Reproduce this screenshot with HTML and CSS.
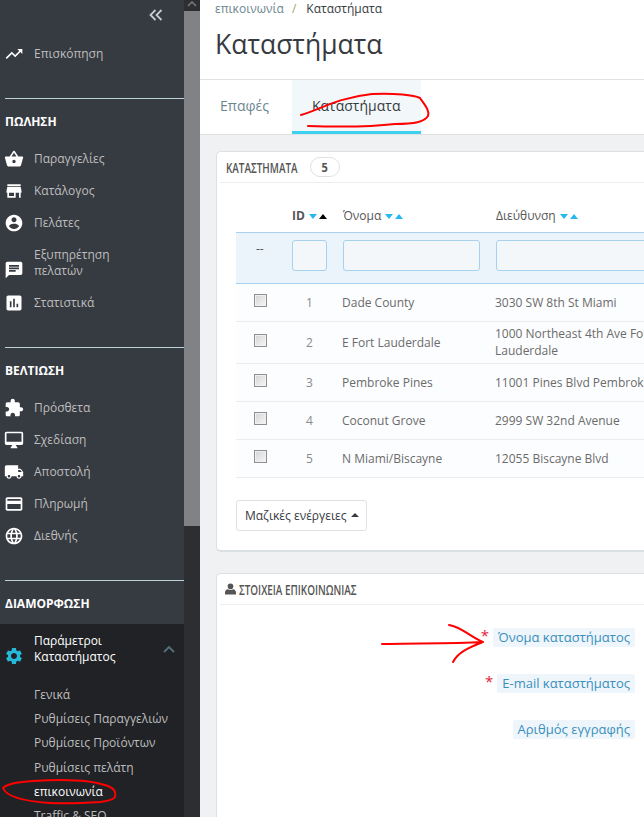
FILE: index.html
```html
<!DOCTYPE html>
<html lang="el">
  <head>
    <meta charset="utf-8">
    <title>Καταστήματα</title>
    <link rel="stylesheet" href="styles.css">
  </head>
  <body>
    <div class="page">
      <nav class="sidebar">
        <div class="collapse">
          <svg viewBox="0 0 14 12" width="14" height="12"><path d="M6.500 1 1.500 6l5 5M12.500 1l-5 5 5 5"/></svg>
        </div>
        <a class="item first"><svg class="ico" viewBox="0 0 24 24"><path d="M16 6l2.290 2.290-4.880 4.880-4-4L2 16.590 3.410 18l6-6 4 4 6.300-6.290L22 12V6z"/></svg><span>Επισκόπηση</span></a>

        <h2 class="section">ΠΩΛΗΣΗ</h2>
        <a class="item"><svg class="ico" viewBox="0 0 24 24"><path d="M17.21 9l-4.38-6.56c-.19-.28-.51-.42-.83-.42-.32 0-.64.14-.83.43L6.79 9H2c-.55 0-1 .45-1 1 0 .09.01.18.04.27l2.54 9.27c.23.84 1 1.46 1.92 1.46h13c.92 0 1.69-.62 1.93-1.46l2.54-9.27L23 10c0-.55-.45-1-1-1h-4.79zM9 9l3-4.4L15 9H9zm3 8c-1.1 0-2-.9-2-2s.9-2 2-2 2 .9 2 2-.9 2-2 2z"/></svg><span>Παραγγελίες</span></a>
        <a class="item"><svg class="ico" viewBox="0 0 24 24"><path d="M20 4H4v2h16V4zm1 10v-2l-1-5H4l-1 5v2h1v6h10v-6h4v6h2v-6h1zm-9 4H6v-4h6v4z"/></svg><span>Κατάλογος</span></a>
        <a class="item"><svg class="ico" viewBox="0 0 24 24"><path d="M12 2C6.48 2 2 6.48 2 12s4.48 10 10 10 10-4.48 10-10S17.52 2 12 2zm0 3c1.66 0 3 1.34 3 3s-1.34 3-3 3-3-1.34-3-3 1.34-3 3-3zm0 14.2c-2.5 0-4.71-1.28-6-3.22.03-1.99 4-3.08 6-3.08 1.99 0 5.97 1.09 6 3.08-1.29 1.94-3.5 3.22-6 3.22z"/></svg><span>Πελάτες</span></a>
        <a class="item tall"><svg class="ico" viewBox="0 0 24 24"><path d="M20 2H4c-1.1 0-1.99.9-1.99 2L2 22l4-4h14c1.1 0 2-.9 2-2V4c0-1.1-.9-2-2-2zM6 9h12v2H6V9zm8 5H6v-2h8v2zm4-6H6V6h12v2z"/></svg><span>Εξυπηρέτηση<br>πελατών</span></a>
        <a class="item"><svg class="ico" viewBox="0 0 24 24"><path d="M19 3H5c-1.1 0-2 .9-2 2v14c0 1.1.9 2 2 2h14c1.1 0 2-.9 2-2V5c0-1.1-.9-2-2-2zM9 17H7v-7h2v7zm4 0h-2V7h2v10zm4 0h-2v-4h2v4z"/></svg><span>Στατιστικά</span></a>

        <h2 class="section">ΒΕΛΤΙΩΣΗ</h2>
        <a class="item"><svg class="ico" viewBox="0 0 24 24"><path d="M20.5 11H19V7c0-1.1-.9-2-2-2h-4V3.5C13 2.12 11.88 1 10.5 1S8 2.12 8 3.5V5H4c-1.1 0-1.99.9-1.99 2v3.8H3.5c1.49 0 2.7 1.21 2.7 2.7s-1.21 2.7-2.7 2.7H2V20c0 1.1.9 2 2 2h3.8v-1.5c0-1.49 1.21-2.7 2.7-2.7 1.49 0 2.7 1.21 2.7 2.7V22H17c1.1 0 2-.9 2-2v-4h1.5c1.38 0 2.5-1.12 2.5-2.5S21.88 11 20.5 11z"/></svg><span>Πρόσθετα</span></a>
        <a class="item"><svg class="ico" viewBox="0 0 24 24"><path d="M21 2H3c-1.1 0-2 .9-2 2v12c0 1.1.9 2 2 2h7l-2 3v1h8v-1l-2-3h7c1.1 0 2-.9 2-2V4c0-1.1-.9-2-2-2zm0 12H3V4h18v10z"/></svg><span>Σχεδίαση</span></a>
        <a class="item"><svg class="ico" viewBox="0 0 24 24"><path d="M20 8h-3V4H3c-1.1 0-2 .9-2 2v11h2c0 1.66 1.34 3 3 3s3-1.34 3-3h6c0 1.66 1.34 3 3 3s3-1.34 3-3h2v-5l-3-4zM6 18.5c-.83 0-1.5-.67-1.5-1.5s.67-1.5 1.5-1.5 1.5.67 1.5 1.5-.67 1.5-1.5 1.5zm13.5-9l1.96 2.5H17V9.5h2.5zm-1.5 9c-.83 0-1.5-.67-1.5-1.5s.67-1.5 1.5-1.5 1.5.67 1.5 1.5-.67 1.5-1.5 1.5z"/></svg><span>Αποστολή</span></a>
        <a class="item"><svg class="ico" viewBox="0 0 24 24"><path d="M20 4H4c-1.11 0-1.99.89-1.99 2L2 18c0 1.11.89 2 2 2h16c1.11 0 2-.89 2-2V6c0-1.11-.89-2-2-2zm0 14H4v-6h16v6zm0-10H4V6h16v2z"/></svg><span>Πληρωμή</span></a>
        <a class="item"><svg class="ico" viewBox="0 0 24 24"><path d="M11.99 2C6.47 2 2 6.48 2 12s4.47 10 9.99 10C17.52 22 22 17.52 22 12S17.52 2 11.99 2zm6.93 6h-2.95c-.32-1.25-.78-2.45-1.38-3.56 1.84.63 3.37 1.91 4.33 3.56zM12 4.04c.83 1.2 1.48 2.53 1.91 3.96h-3.82c.43-1.43 1.08-2.76 1.91-3.96zM4.26 14C4.1 13.36 4 12.69 4 12s.1-1.36.26-2h3.38c-.08.66-.14 1.32-.14 2 0 .68.06 1.34.14 2H4.26zm.82 2h2.95c.32 1.25.78 2.45 1.38 3.56-1.84-.63-3.37-1.9-4.33-3.56zm2.95-8H5.08c.96-1.66 2.49-2.93 4.33-3.56C8.81 5.55 8.35 6.75 8.03 8zM12 19.96c-.83-1.2-1.48-2.53-1.91-3.96h3.82c-.43 1.43-1.08 2.76-1.91 3.96zM14.34 14H9.66c-.09-.66-.16-1.32-.16-2 0-.68.07-1.35.16-2h4.68c.09.65.16 1.32.16 2 0 .68-.07 1.34-.16 2zm.25 5.56c.6-1.11 1.06-2.31 1.38-3.56h2.95c-.96 1.65-2.49 2.93-4.33 3.56zM16.36 14c.08-.66.14-1.32.14-2 0-.68-.06-1.34-.14-2h3.38c.16.64.26 1.31.26 2s-.1 1.36-.26 2h-3.38z"/></svg><span>Διεθνής</span></a>

        <h2 class="section">ΔΙΑΜΟΡΦΩΣΗ</h2>
        <div class="open-group">
          <a class="item tall current">
            <svg class="ico cog" viewBox="0 0 24 24"><path d="M19.14 12.94c.04-.3.06-.61.06-.94 0-.32-.02-.64-.07-.94l2.03-1.58c.18-.14.23-.41.12-.61l-1.92-3.32c-.12-.22-.37-.29-.59-.22l-2.39.96c-.5-.38-1.03-.7-1.62-.94l-.36-2.54c-.04-.24-.24-.41-.48-.41h-3.84c-.24 0-.43.17-.47.41l-.36 2.54c-.59.24-1.13.57-1.62.94l-2.39-.96c-.22-.08-.47 0-.59.22L2.74 8.87c-.12.21-.08.47.12.61l2.03 1.58c-.05.3-.09.63-.09.94s.02.64.07.94l-2.03 1.58c-.18.14-.23.41-.12.61l1.92 3.32c.12.22.37.29.59.22l2.39-.96c.5.38 1.03.7 1.62.94l.36 2.54c.05.24.24.41.48.41h3.84c.24 0 .44-.17.47-.41l.36-2.54c.59-.24 1.13-.56 1.62-.94l2.39.96c.22.08.47 0 .59-.22l1.92-3.32c.12-.22.07-.47-.12-.61l-2.01-1.58zM12 15.6c-1.98 0-3.6-1.62-3.6-3.6s1.62-3.6 3.6-3.6 3.6 1.62 3.6 3.6-1.62 3.6-3.6 3.6z"/></svg>
            <span>Παράμετροι<br>Καταστήματος</span>
            <svg class="chevron" viewBox="0 0 12 8" width="12" height="8"><path d="M1 7l5-5 5 5"/></svg>
          </a>
          <ul class="subnav">
            <li>Γενικά</li>
            <li>Ρυθμίσεις Παραγγελιών</li>
            <li>Ρυθμίσεις Προϊόντων</li>
            <li>Ρυθμίσεις πελάτη</li>
            <li class="on">επικοινωνία</li>
            <li>Traffic &amp; SEO</li>
          </ul>
        </div>
      </nav>

      <div class="scrollbar">
        <div class="scroll-btn"><svg viewBox="0 0 10 6" width="10" height="6"><path d="M1 5l4-4 4 4"/></svg></div>
        <div class="scroll-thumb"></div>
      </div>

      <main class="content">
        <header class="head">
          <div class="crumbs"><span class="crumb-link">επικοινωνία</span><i>/</i><span>Καταστήματα</span></div>
          <h1>Καταστήματα</h1>
        </header>
        <div class="tabs">
          <a class="tab">Επαφές</a>
          <a class="tab active">Καταστήματα</a>
        </div>
        <div class="body">
          <section class="panel stores">
            <div class="panel-head"><span class="title t-stores">ΚΑΤΑΣΤΗΜΑΤΑ</span><span class="badge"><span class="badge-num">5</span></span></div>
            <table class="grid">
              <colgroup><col class="c-check"><col class="c-id"><col class="c-name"><col class="c-addr"></colgroup>
              <thead>
                <tr class="titles">
                  <th></th>
                  <th class="strong">ID<span class="sort"><b class="down"></b><b class="up dark"></b></span></th>
                  <th class="shift">Όνομα<span class="sort"><b class="down"></b><b class="up"></b></span></th>
                  <th class="shift">Διεύθυνση<span class="sort"><b class="down"></b><b class="up"></b></span></th>
                </tr>
                <tr class="filters">
                  <td class="dashes">--</td>
                  <td><input class="f-input" type="text"></td>
                  <td><input class="f-input" type="text"></td>
                  <td><input class="f-input wide" type="text"></td>
                </tr>
              </thead>
              <tbody>
                <tr><td class="chk"><input type="checkbox"></td><td class="num">1</td><td>Dade County</td><td>3030 SW 8th St Miami</td></tr>
                <tr><td class="chk"><input type="checkbox"></td><td class="num">2</td><td>E Fort Lauderdale</td><td>1000 Northeast 4th Ave Fort Lauderdale</td></tr>
                <tr><td class="chk"><input type="checkbox"></td><td class="num">3</td><td>Pembroke Pines</td><td class="nowrap">11001 Pines Blvd Pembroke Pines</td></tr>
                <tr><td class="chk"><input type="checkbox"></td><td class="num">4</td><td>Coconut Grove</td><td>2999 SW 32nd Avenue</td></tr>
                <tr><td class="chk"><input type="checkbox"></td><td class="num">5</td><td>N Miami/Biscayne</td><td>12055 Biscayne Blvd</td></tr>
              </tbody>
            </table>
            <button class="bulk" type="button">Μαζικές ενέργειες<b class="bulk-caret"></b></button>
          </section>

          <section class="panel contact">
            <div class="panel-head">
              <svg class="user" viewBox="0 0 12 12" width="11" height="12"><path d="M6 0a3 3 0 1 1 0 6.200A3 3 0 0 1 6 0zM0 12V9.600C0 7.600 1.600 6.400 3 6.200c.9.6 1.900.9 3 .9s2.100-.3 3-.9c1.400.2 3 1.400 3 3.400V12z"/></svg>
              <span class="title t-contact">ΣΤΟΙΧΕΙΑ ΕΠΙΚΟΙΝΩΝΙΑΣ</span>
            </div>
            <div class="form-rows">
              <div class="form-row"><em>*</em><label>Όνομα καταστήματος</label></div>
              <div class="form-row"><em>*</em><label>E-mail καταστήματος</label></div>
              <div class="form-row"><label>Αριθμός εγγραφής</label></div>
            </div>
          </section>
        </div>
      </main>

      <svg class="scribbles" viewBox="0 0 644 817" width="644" height="817">
        <path d="M301 115C320 110 335 98 372 94C395 93 414 95 420 98C424 104 430 110 428 116C424 122 415 124 395 124C370 127 340 127 308 126"/>
        <path d="M382 644C410 643 450 644 483 642M449 625C462 627 470 637 483 642C470 647 458 652 453 662"/>
        <path d="M33 781C20 782 8 783 3 788C6 796 20 801 50 803C70 804 85 803 100 802C108 801 113 800 115 797C116 792 115 789 108 786C95 781 75 778 33 781"/>
      </svg>
    </div>
  </body>
</html>
```

FILE: styles.css
```css
* {
  box-sizing: border-box;
}
html, body {
  margin: 0;
  height: 100%;
  overflow: hidden;
}
body {
  font-family: "Open Sans", "Liberation Sans", sans-serif;
  font-size: 12px;
  color: #555;
  background: #fff;
}
.page {
  position: relative;
  display: flex;
  width: 644px;
  height: 817px;
  overflow: hidden;
}

/* sidebar */
.sidebar {
  width: 184px;
  flex: none;
  background: #363a41;
  color: #bebebe;
  overflow: hidden;
  padding-top: 6px;
}
.collapse {
  height: 18px;
  padding: 3px 0 0 149px;
}
.collapse svg {
  display: block;
  fill: none;
  stroke: #c4cdd2;
  stroke-width: 1.8;
}
.item {
  display: flex;
  align-items: center;
  height: 32px;
  padding-left: 4px;
  line-height: 16px;
}
.item.first {
  margin-top: 14px;
}
.item.tall {
  height: 48px;
}
.item span {
  margin-left: 10px;
}
.ico {
  width: 20px;
  height: 20px;
  flex: none;
  fill: #fff;
}
.item.tall .ico {
  margin-top: 14px;
}
.section {
  margin: 28px 0 0 5px;
  border-top: 1px solid #bcd0d8;
  padding: 15px 0 13px;
  font-size: 12px;
  line-height: 16px;
  font-weight: 700;
  color: #fff;
}
.open-group {
  margin-top: -1px;
  background: #202226;
  height: 200px;
}
.item.current {
  height: 50px;
  color: #fff;
}
.cog {
  fill: #25b9d7;
}
.chevron {
  margin: 0 9px 0 auto;
  fill: none;
  stroke: #54707a;
  stroke-width: 1.8;
}
.subnav {
  list-style: none;
  margin: 0;
  padding: 9px 0 0 34px;
}
.subnav li {
  height: 24.2px;
  line-height: 24px;
  white-space: nowrap;
}
.subnav .on {
  color: #fff;
}

/* page scrollbar */
.scrollbar {
  width: 16px;
  flex: none;
  background: #2c2e31;
}
.scroll-btn {
  height: 11px;
  padding: 1px 0 0 3px;
}
.scroll-btn svg {
  display: block;
  fill: none;
  stroke: #777;
  stroke-width: 1.6;
}
.scroll-thumb {
  height: 515px;
  background: #808285;
}

/* main column */
.content {
  flex: 1;
  min-width: 0;
  overflow: hidden;
}
.head {
  height: 80px;
  padding: 1px 15px 0;
  border-bottom: 1px solid #dfe1e2;
}
.crumbs {
  height: 16px;
  line-height: 16px;
  white-space: nowrap;
}
.crumbs i {
  margin: 0 10px 0 8px;
  font-style: normal;
  color: #a9a25f;
}
.crumbs span {
  color: #363a41;
}
.crumbs .crumb-link {
  color: #6c868e;
}
h1 {
  margin: 9px 0 0;
  font-size: 26.5px;
  line-height: 36px;
  font-weight: 400;
  color: #363a41;
}
.tabs {
  display: flex;
  height: 55px;
  border-bottom: 1px solid #dfe1e2;
}
.tab {
  padding: 0 20px;
  font-size: 14px;
  line-height: 51px;
  color: #6c868e;
}
.tab:first-child {
  width: 92px;
}
.tab.active {
  width: 129px;
  background: #f2f7fa;
  border-bottom: 3px solid #3ed2f0;
  color: #363a41;
}
.body {
  background: #eff1f2;
  padding: 16px 0 0 16px;
  height: 700px;
}
.panel {
  width: 600px;
  background: #fff;
  border: 1px solid #dbe0e2;
  border-bottom-width: 2px;
  border-right: 0;
  border-radius: 5px 0 0 5px;
  padding-left: 3px;
}
.stores {
  height: 401px;
}
.contact {
  margin-top: 21px;
  height: 300px;
}
.panel-head {
  display: flex;
  align-items: center;
  height: 31px;
  padding-left: 6px;
  border-bottom: 1px solid #eceeef;
  font-size: 15px;
  font-weight: 600;
  color: #555;
  white-space: nowrap;
}
.contact .panel-head {
  padding-left: 5px;
}

/* the heading face is a narrow one, none is installed so squeeze this one */
.title {
  display: inline-block;
  transform: scaleX(.66);
  transform-origin: left center;
}
.t-stores {
  width: 75px;
}
.t-contact {
  width: 129px;
  margin-left: 3px;
}
.badge {
  width: 30px;
  height: 20px;
  margin-left: 9px;
  border: 1px solid #dfe1e2;
  border-radius: 10px;
  font-size: 13px;
  text-align: center;
  line-height: 18px;
}
.badge-num {
  display: inline-block;
  font-weight: 700;
  transform: scaleX(.85);
}
.user {
  fill: #555;
}

/* stores table */
.grid {
  table-layout: fixed;
  width: 449px;
  margin: 0 0 0 16px;
  border-collapse: collapse;
}
.c-check { width: 56px; }
.c-id { width: 50px; }
.c-name { width: 153px; }
.c-addr { width: 190px; }
.grid th {
  height: 49px;
  padding: 16px 0 0;
  text-align: left;
  font-weight: 400;
  color: #555;
  white-space: nowrap;
}
.grid th.strong {
  font-weight: 700;
}
.grid th.shift {
  padding-left: 1px;
}
.sort {
  display: inline-block;
  margin-left: 2px;
}
.sort b {
  display: inline-block;
  margin-left: 2px;
  border-left: 4.5px solid transparent;
  border-right: 4.5px solid transparent;
  vertical-align: middle;
}
.sort .down {
  border-top: 5px solid #25b9f0;
}
.sort .up {
  border-bottom: 5px solid #25b9f0;
}
.sort .up.dark {
  border-bottom-color: #000;
}
.filters td {
  height: 51px;
  padding: 0 0 5px;
  background: #ebf4fb;
  border-top: 1px solid #a7d2ef;
  border-bottom: 1px solid #a7d2ef;
}
.filters td.dashes {
  padding: 0 0 18px 20px;
}
.f-input {
  display: block;
  width: 137px;
  height: 31px;
  margin-left: 1px;
  border: 1px solid #a7d2ef;
  border-radius: 3px;
  background: #f3f7f9;
}
.f-input.wide {
  width: 180px;
}
.filters td:nth-child(2) .f-input {
  width: 35px;
  margin-left: 0;
}
.grid tbody td {
  height: 38px;
  padding: 0;
  background: #fcfdfe;
  border-bottom: 1px solid #eaedef;
  line-height: 17px;
  color: #6b6b6b;
}
.grid tbody tr:nth-child(2) td {
  height: 42px;
}
.grid tbody td.nowrap {
  white-space: nowrap;
}
.grid tbody td.num {
  padding-right: 15px;
  text-align: center;
  color: #8a8a8a;
}
.grid tbody td.chk {
  padding: 0 0 4px 18px;
}
.chk input {
  appearance: none;
  display: block;
  width: 13px;
  height: 13px;
  margin: 0;
  border: 1px solid #8f8f8f;
  background: linear-gradient(135deg, #d4d4d4, #f6f6f6);
  box-shadow: inset 0 0 0 1px #f0f0f0;
}
.bulk {
  display: flex;
  align-items: center;
  height: 31px;
  margin: 22px 0 0 16px;
  padding: 0 7px 0 8px;
  border: 1px solid #dfe1e2;
  border-radius: 3px;
  background: #fff;
  font: 12px "Open Sans", sans-serif;
  color: #363a41;
}
.bulk-caret {
  margin-left: 4px;
  border-left: 4px solid transparent;
  border-right: 4px solid transparent;
  border-bottom: 4px solid #363a41;
}

/* contact form labels */
.form-rows {
  padding: 23px 0 0;
}
.form-row {
  display: flex;
  justify-content: flex-end;
  gap: 4px;
  width: 415px;
  height: 46px;
}
.form-row em {
  font-style: normal;
  font-size: 15px;
  line-height: 14px;
  color: #e01b3c;
}
.form-row label {
  height: 19px;
  padding: 0 5px;
  border-radius: 2px;
  background: #eef6fb;
  font-size: 13px;
  line-height: 18px;
  color: #3a8fbb;
  white-space: nowrap;
}

/* hand-drawn marks on top of the screenshot */
.scribbles {
  position: absolute;
  left: 0;
  top: 0;
  pointer-events: none;
}
.scribbles path {
  fill: none;
  stroke: #f00;
  stroke-width: 2;
  stroke-linecap: round;
  stroke-linejoin: round;
}
```
